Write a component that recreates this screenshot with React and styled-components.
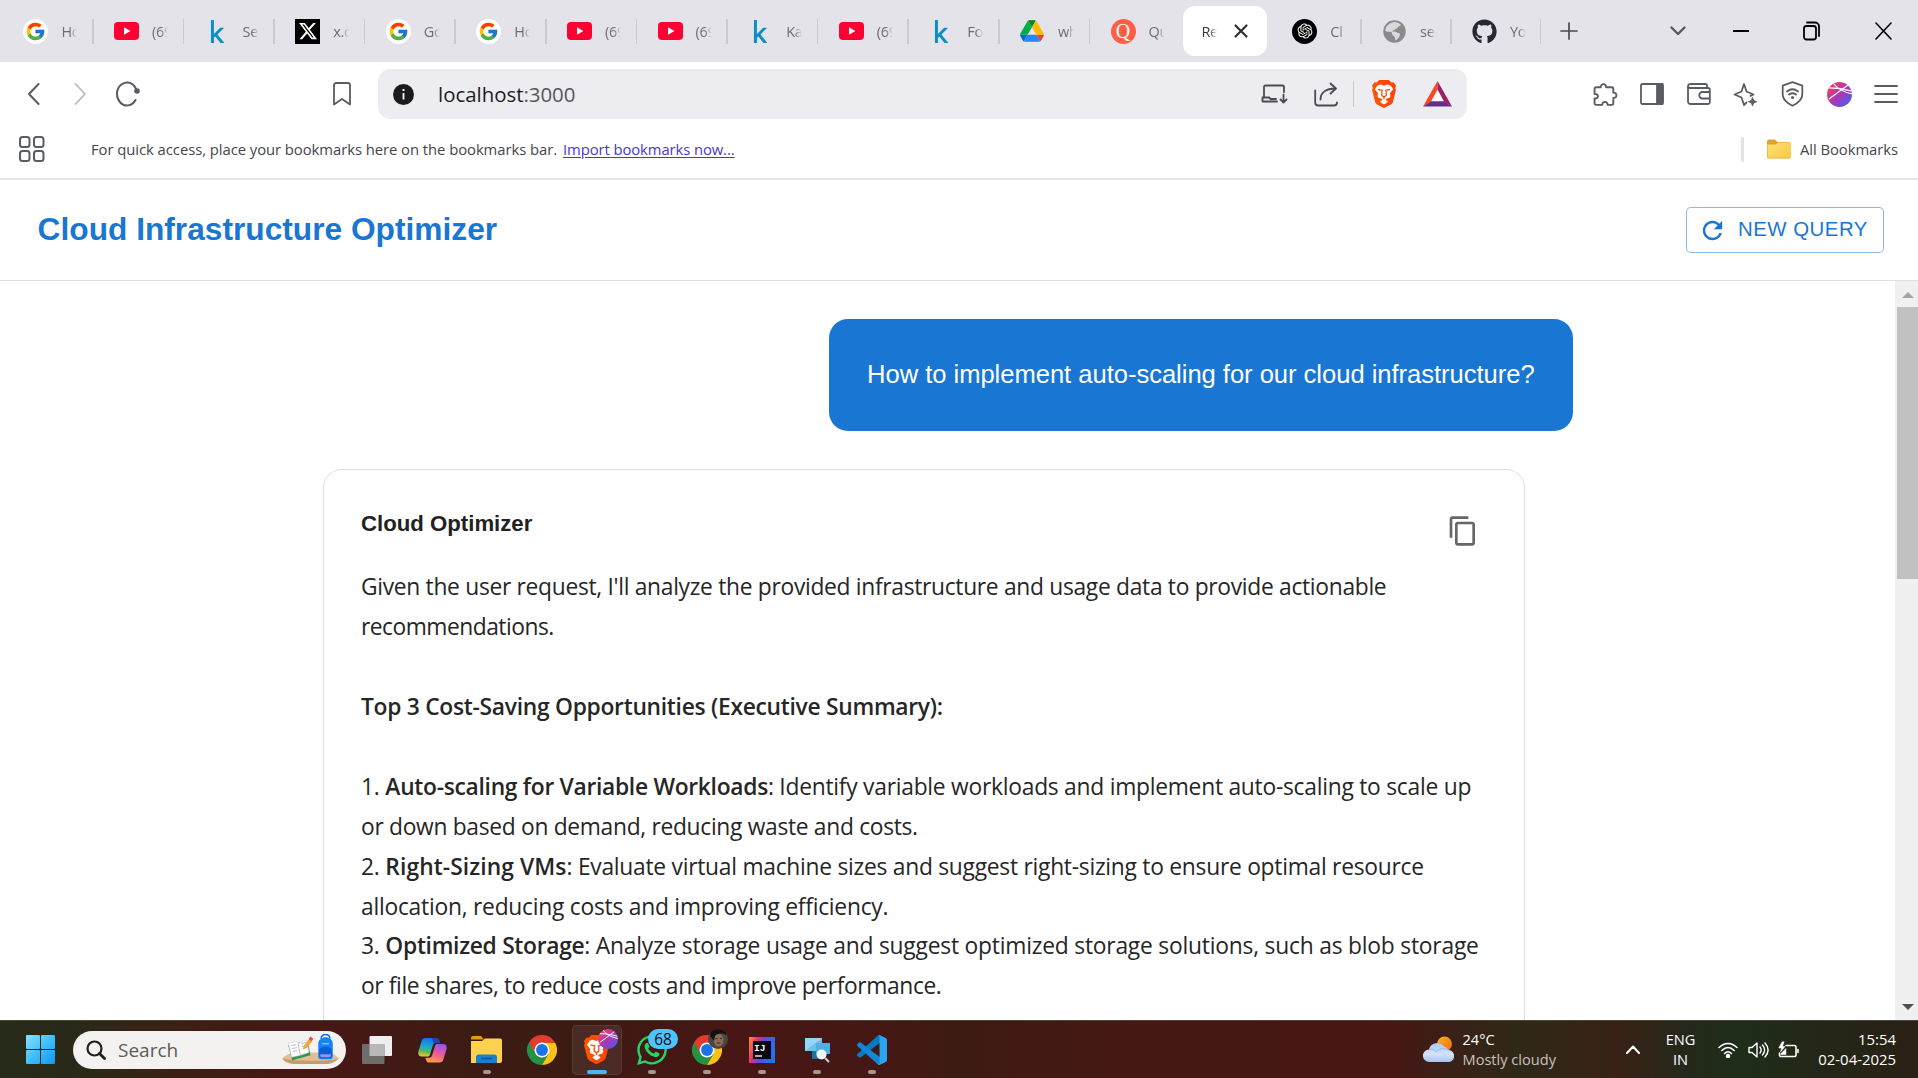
import React from 'react';
import styled, { createGlobalStyle, css } from 'styled-components';
import { FcGoogle } from 'react-icons/fc';
import { FaXTwitter, FaGithub, FaWhatsapp, FaKaggle } from 'react-icons/fa6';
import { RiOpenaiFill } from 'react-icons/ri';

const uiFont = '"Open Sans", "Noto Sans", sans-serif';
const appFont = '"Liberation Sans", Arial, sans-serif';

const GlobalStyle = createGlobalStyle`
  * { box-sizing: border-box; }
  html, body { margin: 0; padding: 0; background: #fff; overflow: hidden; }
  svg { display: block; flex: none; }
`;

const Screen = styled.div`
  width: 1918px;
  height: 1078px;
  display: flex;
  flex-direction: column;
  overflow: hidden;
  background: #fff;
  font-family: ${uiFont};
`;

/* ---------- tab strip ---------- */

const TabStrip = styled.div`
  flex: none;
  height: 62px;
  display: flex;
  align-items: flex-start;
  padding: 6px 0 0 3px;
  background: #e4e3e9;
`;

const TabBox = styled.div`
  flex: none;
  position: relative;
  display: flex;
  align-items: center;
  gap: 13px;
  width: ${(p) => p.$w}px;
  height: 50px;
  padding-left: 20.4px;
  color: #6c6c72;
  ${(p) =>
    p.$sep &&
    css`
      &::after {
        content: '';
        position: absolute;
        right: 0;
        top: 13px;
        width: 1.5px;
        height: 25px;
        background: #cbcad0;
      }
    `}
  ${(p) =>
    p.$active &&
    css`
      margin: 0 5px 0 2.2px;
      padding-left: 18.500px;
      gap: 12px;
      background: #fff;
      color: #3b3b40;
      border-radius: 12px;
    `}
`;

const Favicon = styled.span`
  flex: none;
  width: 25px;
  height: 25px;
  display: flex;
  align-items: center;
  justify-content: center;
  border-radius: ${(p) => (p.$round ? '50%' : 0)};
  background: ${(p) => p.$bg || 'transparent'};
  color: ${(p) => p.$fg || '#000'};
`;

const TabLabel = styled.span`
  flex: none;
  width: 16px;
  overflow: hidden;
  white-space: nowrap;
  font-size: 14.5px;
  line-height: 22px;
  padding-top: 2px;
  letter-spacing: -0.3px;
  mask-image: linear-gradient(90deg, #000 55%, transparent 100%);
`;

const Slot = styled.span`
  flex: none;
  width: ${(p) => p.$w}px;
  height: 100%;
  display: flex;
  align-items: center;
  justify-content: center;
`;

const WindowControls = styled.div`
  flex: 1;
  height: 50px;
  display: flex;
  align-items: center;
`;

const Grow = styled.span`
  flex: 1;
`;

/* ---------- toolbar ---------- */

const Toolbar = styled.div`
  flex: none;
  height: 64px;
  display: flex;
  align-items: center;
  padding: 0 8.6px 0 10px;
  background: #fff;
`;

const AddressBar = styled.div`
  flex: none;
  margin-left: 13px;
  width: 1089px;
  height: 50px;
  display: flex;
  align-items: center;
  padding-left: 15px;
  padding-right: 7px;
  border-radius: 12px;
  background: #edecf1;
`;

const Url = styled.span`
  margin-left: 24px;
  font-size: 20.4px;
  line-height: 28px;
  color: #1b1b1f;
`;

const Port = styled.span`
  color: #55555c;
`;

const Rule = styled.span`
  flex: none;
  width: ${(p) => p.$w}px;
  height: ${(p) => p.$h}px;
  border-radius: 1px;
  background: ${(p) => p.$c};
`;

const Extensions = styled.div`
  flex: 1;
  height: 50px;
  display: flex;
  align-items: center;
  justify-content: flex-end;
`;

/* ---------- bookmarks bar ---------- */

const BookmarksBar = styled.div`
  flex: none;
  height: 54px;
  display: flex;
  align-items: center;
  padding: 0 20px 6px 19px;
  border-bottom: 2px solid #e4e3e9;
  font-size: 14.8px;
  line-height: 20px;
  letter-spacing: -0.04px;
  color: #45454b;
`;

const Hint = styled.span`
  margin-left: 46px;
`;

const ImportLink = styled.a`
  margin-left: 6px;
  color: #4437d8;
  text-decoration: underline;
  text-underline-offset: 2px;
  letter-spacing: -0.08px;
`;

const AllBookmarks = styled.span`
  margin-left: 9px;
`;

/* ---------- application ---------- */

const AppHeader = styled.header`
  flex: none;
  height: 101px;
  display: flex;
  align-items: center;
  justify-content: space-between;
  padding: 0 34px 0 37.6px;
  border-bottom: 1px solid #dfdfdf;
  background: #fff;
`;

const Title = styled.h1`
  margin: -2px 0 0;
  font-family: ${appFont};
  font-weight: 700;
  font-size: 31.7px;
  line-height: 40px;
  color: #1976d2;
`;

const OutlinedButton = styled.button`
  width: 198px;
  height: 46px;
  display: flex;
  align-items: center;
  padding: 0 0 0 10.5px;
  gap: 11.500px;
  border: 1px solid rgba(25, 118, 210, 0.5);
  border-radius: 5px;
  background: #fff;
  color: #1976d2;
  font-family: ${appFont};
  font-size: 20.4px;
  letter-spacing: 0.5px;
  white-space: nowrap;
`;

const ButtonText = styled.span`
  line-height: 24px;
  margin-top: -3px;
`;

const Workspace = styled.div`
  flex: 1;
  min-height: 0;
  display: flex;
`;

const Conversation = styled.main`
  flex: 1;
  min-width: 0;
  overflow: hidden;
  display: flex;
  flex-direction: column;
  gap: 38px;
  padding: 38px 322px 0 323px;
`;

const UserMessage = styled.div`
  flex: none;
  align-self: flex-end;
  width: 744px;
  height: 112px;
  padding: 0 38px 2px;
  display: flex;
  align-items: center;
  border-radius: 19px;
  background: #1976d2;
  color: #fff;
  font-family: ${appFont};
  font-size: 25.6px;
  letter-spacing: -0.04px;
  line-height: 38px;
  white-space: nowrap;
`;

const AnswerCard = styled.article`
  flex: none;
  width: 1202px;
  height: 900px;
  padding: 37px 45px 0 37px;
  border: 1px solid #dfdfdf;
  border-radius: 19px;
  background: #fff;
`;

const CardHeader = styled.div`
  display: flex;
  justify-content: space-between;
  height: 60.400px;
  color: #666;
`;

const CardTitle = styled.h2`
  margin: 0;
  font-family: ${appFont};
  font-weight: 700;
  font-size: 22.2px;
  line-height: 33px;
  color: #212121;
`;

const CopyButton = styled.span`
  margin-top: 8px;
`;

const Line = styled.p`
  margin: 0;
  height: ${(p) => (p.$gap ? 79.8 : 39.9)}px;
  line-height: 39.9px;
  font-size: 22.8px;
  white-space: pre;
  color: #262626;
`;

const Seg = styled.span`
  letter-spacing: ${(p) => p.$t}px;
  font-weight: ${(p) => (p.$b ? 600 : 400)};
`;

const Scrollbar = styled.div`
  flex: none;
  width: 23px;
  display: flex;
  flex-direction: column;
  align-items: center;
  padding: 11px 0 10px 2px;
  background: #f0f0f0;
`;

const Thumb = styled.span`
  width: 21px;
  height: 272px;
  margin-top: 9px;
  background: #c1c1c1;
`;

/* ---------- taskbar ---------- */

const Taskbar = styled.footer`
  flex: none;
  height: 58px;
  display: flex;
  align-items: center;
  padding-right: 22px;
  padding-left: 18px;
  border-top: 1px solid #4a4638;
  background: linear-gradient(
    90deg,
    #262b1a 0,
    #2b2818 90px,
    #3b2016 170px,
    #471715 300px,
    #3c1b15 480px,
    #3b1b14 560px,
    #471615 720px,
    #451715 860px,
    #3e1a15 960px,
    #461715 1150px,
    #471615 1390px,
    #3a2017 1450px,
    #2f2819 1520px,
    #392117 1620px,
    #23291a 1690px,
    #1e2d1a 1740px,
    #242618 1820px,
    #2a2016 1918px
  );
  color: #fff;
`;

const SearchPill = styled.div`
  flex: none;
  width: 273px;
  height: 38px;
  margin: 0 0 0 10px;
  display: flex;
  align-items: center;
  padding: 0 7px 0 13px;
  border-radius: 19px;
  background: #f4f2f1;
  color: #5b5b5b;
  font-size: 19px;
`;

const SearchText = styled.span`
  margin-left: 12px;
  line-height: 24px;
`;

const TaskItem = styled.span`
  flex: none;
  position: relative;
  width: ${(p) => p.$w || 55}px;
  height: 50px;
  display: flex;
  align-items: center;
  justify-content: center;
  &::after {
    content: '';
    display: ${(p) => (p.$run || p.$active ? 'block' : 'none')};
    position: absolute;
    bottom: 1px;
    left: 50%;
    width: ${(p) => (p.$active ? 20 : 8)}px;
    height: 4px;
    margin-left: ${(p) => (p.$active ? -10 : -4)}px;
    border-radius: 2px;
    background: ${(p) => (p.$active ? '#45b8f7' : '#a79592')};
  }
`;

const ActiveTile = styled.span`
  width: 50px;
  height: 50px;
  display: flex;
  align-items: center;
  justify-content: center;
  border: 1px solid rgba(255, 255, 255, 0.08);
  border-radius: 5px;
  background: rgba(255, 255, 255, 0.07);
`;

const Overlay = styled.span`
  position: absolute;
  left: ${(p) => p.$x}px;
  top: ${(p) => p.$y}px;
`;

const Badge = styled.span`
  position: absolute;
  left: 24px;
  top: 4px;
  width: 30px;
  height: 20px;
  border-radius: 10px;
  background: #4cc2ff;
  color: #111;
  font-size: 15.5px;
  line-height: 20px;
  text-align: center;
`;

const Weather = styled.div`
  display: flex;
  align-items: center;
  gap: 9px;
  width: 190px;
`;

const Stack = styled.div`
  display: flex;
  flex-direction: column;
  align-items: ${(p) => p.$align || 'flex-start'};
  width: ${(p) => (p.$w ? p.$w + 'px' : 'auto')};
  margin-top: -1px;
  font-size: ${(p) => p.$fs || 14.6}px;
  line-height: 20px;
  white-space: nowrap;
`;

const Dim = styled.span`
  color: #c9c2bc;
`;

/* ---------- drawings ---------- */

const Youtube = () => (
  <svg width="25" height="18" viewBox="0 0 25 18">
    <rect width="25" height="18" rx="4" fill="#ff0033" />
    <path d="M10 5.2v7.6l6.4-3.8z" fill="#fff" />
  </svg>
);
const Drive = () => (
  <svg width="24" height="22" viewBox="0 0 87.3 78">
    <path d="m6.6 66.85 3.85 6.65c.8 1.4 1.95 2.5 3.3 3.3l13.75-23.8h-27.5c0 1.55.4 3.1 1.2 4.5z" fill="#0066da" />
    <path d="m43.65 25-13.75-23.8c-1.35.8-2.5 1.9-3.3 3.3l-25.4 44a9.06 9.06 0 0 0 -1.2 4.5h27.5z" fill="#00ac47" />
    <path d="m73.55 76.8c1.35-.8 2.5-1.9 3.3-3.3l1.6-2.75 7.65-13.25c.8-1.4 1.2-2.95 1.2-4.5h-27.5l5.85 11.5z" fill="#ea4335" />
    <path d="m43.65 25 13.75-23.8c-1.35-.8-2.9-1.2-4.5-1.2h-18.5c-1.6 0-3.15.45-4.5 1.2z" fill="#00832d" />
    <path d="m59.8 53h-32.3l-13.75 23.8c1.35.8 2.9 1.2 4.5 1.2h50.8c1.6 0 3.15-.45 4.5-1.2z" fill="#2684fc" />
    <path d="m73.4 26.5-12.7-22c-.8-1.4-1.95-2.5-3.3-3.3l-13.75 23.8 16.15 28h27.45c0-1.55-.4-3.1-1.2-4.5z" fill="#ffba00" />
  </svg>
);
const QMark = styled.span`
  font-family: "Liberation Serif", serif;
  font-size: 20px;
  line-height: 24px;
  color: #fff;
`;
const Globe = () => (
  <svg width="23" height="23" viewBox="0 0 23 23">
    <circle cx="11.5" cy="11.5" r="11.2" fill="#8a8a8a" />
    <path d="M10 2.2c3-.6 6 .6 8 2.8-1 1.2-3 1-3.2 2.6-.2 1.2-1.8 1-2.6 1.8-1 1-2.4.6-3 1.8 1.6.4 3.6-.2 4.6 1 1 1.4 3.4.2 3.2 2.4-.4 2.4-2 4.6-4.4 5.8-.8-1.2-.2-2.4-1-3.4-1-1.2-2.8-1.600-2.600-3.400.2-1.400-1.200-2-2.600-1.800-1.800.2-3.800-.6-4.200-1.400.4-4 3.800-7.400 7.800-8.200z" fill="#d9d8dd" />
  </svg>
);
const Lion = ({ s }) => (
  <svg width={s} height={(s * 28) / 24} viewBox="0 0 24 28">
    <defs>
      <linearGradient id="lion" x1="0" y1="0" x2="1" y2="0">
        <stop offset="0" stopColor="#ff5500" />
        <stop offset="1" stopColor="#ff4100" />
      </linearGradient>
    </defs>
    <path d="M7.200 0h9.600l2.600 2.600 2-.3L24 5.600l-.8 2.300.7 2.200-3 11.600c-.4 1.300-1 2.100-2 2.800L13 27.600c-.6.4-1.400.4-2 0l-5.900-3.100c-1-.7-1.600-1.500-2-2.800L.1 10.100l.7-2.200L0 5.600l2.600-3.300 2 .3z" fill="url(#lion)" />
    <path d="M12 5.600c1 0 2.200-.7 3.900-1l2.600 1 2.600 3.500c0 .8-2.900 3.700-3.200 4.700l.6 2.200-.8 1.700-2.700.9-1.500 1.200 2.300 1.600c-.4 1.100-3 2.600-3.800 2.900-.8-.3-3.400-1.800-3.800-2.900l2.300-1.600L9 18.600l-2.700-.9-.8-1.700.6-2.200c-.3-1-3.200-3.900-3.200-4.700l2.600-3.500 2.600-1c1.700.3 2.900 1 3.900 1z" fill="#fff" />
    <path d="M6 9.400l4.200.9-.5 2M18 9.400l-4.200.9.5 2M9.800 12.300v3.200l2.200 1.600 2.200-1.600v-3.200M12 17.100v2.100" fill="none" stroke="#ff4d0a" strokeWidth="1.300" />
  </svg>
);
const BatTriangle = () => (
  <svg width="29" height="26" viewBox="0 0 29 26">
    <path d="M14.500 0L0 25.500l8.500-5 6-11z" fill="#ff4724" />
    <path d="M14.500 0L29 25.500l-8.500-5-6-11z" fill="#9e1f63" />
    <path d="M0 25.500h29l-8.500-5.500h-12z" fill="#662d91" />
    <path d="M14.500 8.500l6.300 11.700H8.200z" fill="#fff" />
  </svg>
);
const Ball = ({ s = 25, id }) => (
  <svg width={s} height={s} viewBox="0 0 25 25">
    <defs>
      <linearGradient id={id} x1="0.1" y1="0.1" x2="0.9" y2="0.9">
        <stop offset="0" stopColor="#f0435f" />
        <stop offset="0.5" stopColor="#b035b4" />
        <stop offset="1" stopColor="#4a5df0" />
      </linearGradient>
      <clipPath id={id + 'c'}>
        <circle cx="12.5" cy="12.5" r="12.5" />
      </clipPath>
    </defs>
    <circle cx="12.5" cy="12.5" r="12.5" fill={`url(#${id})`} />
    <g clipPath={`url(#${id}c)`} stroke="#fff" strokeWidth="1.200" fill="none">
      <path d="M-1 6c9-.5 17 .5 27 3.500M2 17L21 3M6 1c4 5.500 9 9 20 11" />
    </g>
  </svg>
);
const Ico = ({ w = 24, h = w, c = '#5a5c63', sw = 1.8, vb, children }) => (
  <svg width={w} height={h} viewBox={vb || `0 0 ${w} ${h}`} fill="none" stroke={c} strokeWidth={sw} strokeLinecap="round" strokeLinejoin="round">
    {children}
  </svg>
);
const FolderSmall = () => (
  <svg width="24" height="20" viewBox="0 0 24 20">
    <path d="M0 2.500A2 2 0 0 1 2 .5h6l2.500 2.500H22a1.500 1.500 0 0 1 1.500 1.500V18a1.500 1.500 0 0 1-1.500 1.500H1.500A1.500 1.500 0 0 1 0 18z" fill="#dfa32b" />
    <path d="M.5 5.500H9L11 3.500h11a1.500 1.500 0 0 1 1.500 1.500v12.500a1.200 1.200 0 0 1-1.200 1.200H1.700A1.200 1.200 0 0 1 .5 17.500z" fill="url(#fold)" />
    <defs>
      <linearGradient id="fold" x1="0" y1="0" x2="1" y2="1">
        <stop offset="0" stopColor="#ffe07a" />
        <stop offset="1" stopColor="#f8c93e" />
      </linearGradient>
    </defs>
  </svg>
);
const Explorer = () => (
  <svg width="31" height="27" viewBox="0 0 31 27">
    <path d="M0 2a2 2 0 0 1 2-2h8l3 3.500H0z" fill="#e09c12" />
    <path d="M0 5h11l3-2.500h15a2 2 0 0 1 2 2V25a2 2 0 0 1-2 2H0z" fill="#ffd14d" />
    <path d="M5 27v-6a2.500 2.500 0 0 1 2.500-2.500h16A2.500 2.500 0 0 1 26 21v6z" fill="#1481d3" />
    <path d="M10 22.500h11" stroke="#0b4f96" strokeWidth="1.500" />
  </svg>
);
const Chrome = () => (
  <svg width="30" height="30" viewBox="0 0 48 48">
    <path d="M24 24L3.200 12A24 24 0 0 0 24 48l10.400-18z" fill="#229342" />
    <path d="M44.800 12A24 24 0 0 1 24 48l10.400-18L24 12z" fill="#fbc116" />
    <path d="M24 12h20.800A24 24 0 0 0 3.200 12l10.400 18z" fill="#e33b2e" />
    <circle cx="24" cy="24" r="12" fill="#fff" />
    <circle cx="24" cy="24" r="9.500" fill="#1a73e8" />
  </svg>
);
const Avatar = () => (
  <svg width="20" height="20" viewBox="0 0 20 20">
    <defs>
      <clipPath id="av">
        <circle cx="10" cy="10" r="10" />
      </clipPath>
    </defs>
    <g clipPath="url(#av)">
      <rect width="20" height="20" fill="#4b4644" />
      <ellipse cx="10.500" cy="11" rx="5" ry="6.500" fill="#8d6a58" />
      <path d="M3 0h15v6c-3-2-8-2-11 1l-1 5-4-5z" fill="#15110f" />
      <path d="M7.500 9.500h2M12 9.500h2M9 14h3.500" stroke="#3a241b" strokeWidth="1" />
    </g>
  </svg>
);
const WindowsLogo = () => (
  <svg width="29" height="29" viewBox="0 0 29 29">
    <defs>
      <linearGradient id="win" x1="0" y1="0" x2="29" y2="29" gradientUnits="userSpaceOnUse">
        <stop offset="0" stopColor="#8be0fd" />
        <stop offset="0.500" stopColor="#3fc0fb" />
        <stop offset="1" stopColor="#1096f0" />
      </linearGradient>
    </defs>
    <g fill="url(#win)">
      <rect width="14" height="14" rx="1" />
      <rect x="15" width="14" height="14" rx="1" />
      <rect y="15" width="14" height="14" rx="1" />
      <rect x="15" y="15" width="14" height="14" rx="1" />
    </g>
  </svg>
);
const SchoolArt = () => (
  <svg width="57" height="31" viewBox="0 0 58 32">
    <path d="M0 25c8-8 20-6 30-6h16c5 0 10 3 12 6-3 4-8 6-14 6H16C9 31 3 30 0 25z" fill="#e3bd93" />
    <path d="M0 25c6 3 50 4 58 0-3 4-8 6-14 6H16C9 31 3 30 0 25z" fill="#c99a6c" />
    <path d="M6 11l20-4 3 15-19 5z" fill="#2f9650" />
    <path d="M6 9l9-1 2 1 8-3 2.500 13-9 3-9 2z" fill="#fff" stroke="#c8c8d8" strokeWidth="0.500" />
    <path d="M16 9l2.500 13M9 12l5-.8M9.800 15l5-.8M10.400 18l5-.8M19.500 10l5-1.500M20.200 13l5-1.500" stroke="#a9a5bd" strokeWidth="0.800" />
    <path d="M21 16l1-4 6-7 3 2.500-6 7z" fill="#f7a531" />
    <path d="M27 5l2-2.500 3 2.500-2 2.500z" fill="#e8485a" />
    <path d="M40 5c0-6 9-6 9 0" fill="none" stroke="#1168d8" strokeWidth="1.500" />
    <path d="M37 10c0-9 15-9 15 0v13c0 2-1 3-3 3h-9c-2 0-3-1-3-3z" fill="#1583f5" />
    <path d="M38 17c0-5 13-5 13 0v6c0 1-1 2-2 2h-9c-1 0-2-1-2-2z" fill="#0b5fd6" />
    <path d="M39 21h11v1.500c0 1-1 1.500-2 1.500h-7c-1 0-2-.5-2-1.500z" fill="#9c8df7" />
    <path d="M41 10h7" stroke="#7cc4ff" strokeWidth="1.500" />
  </svg>
);
const TaskView = () => (
  <svg width="30" height="28" viewBox="0 0 30 28">
    <rect x="7.500" y="0" width="22.500" height="20" rx="1" fill="#efefef" />
    <rect x="0" y="8" width="22.500" height="20" rx="1" fill="#6f6c6b" />
    <path d="M7.500 8h15v12h-15z" fill="#b9b8b8" />
  </svg>
);
const Copilot = () => (
  <svg width="29" height="26" viewBox="0 0 29 26">
    <defs>
      <linearGradient id="cpa" x1="0.5" y1="0" x2="0.3" y2="1">
        <stop offset="0" stopColor="#1b6fe0" />
        <stop offset="0.45" stopColor="#17a6d8" />
        <stop offset="0.75" stopColor="#58b957" />
        <stop offset="1" stopColor="#f5c828" />
      </linearGradient>
      <linearGradient id="cpb" x1="0.7" y1="0" x2="0.3" y2="1">
        <stop offset="0" stopColor="#9a52e8" />
        <stop offset="0.55" stopColor="#ee5f8e" />
        <stop offset="1" stopColor="#fba042" />
      </linearGradient>
    </defs>
    <path d="M7.500 1h10c1.800 0 3 1 3.500 2.600L21.700 6H18c-1.700 0-2.700.8-3.200 2.600L12 17.400c-.4 1.400-1.200 2-2.400 2H4C1 19.400-.2 17.500.4 14.600L3.600 4C4.200 2 5.400 1 7.500 1z" fill="url(#cpa)" />
    <path d="M21.500 25.500h-10c-1.800 0-3-1-3.500-2.600l-.6-2.200H11c1.700 0 2.700-.8 3.200-2.600L17 9.100c.4-1.400 1.200-2 2.400-2H25c3 0 4.200 1.900 3.600 4.800l-3.200 10.600c-.6 2-1.800 3-3.900 3z" fill="url(#cpb)" />
    <path d="M14 1h3.500c1.800 0 3 1 3.500 2.600L21.700 6H18c-1 0-1.800.3-2.400 1z" fill="#1a48b8" />
  </svg>
);
const JetText = styled.text`
  font-family: "Liberation Mono", monospace;
  font-weight: 700;
  font-size: 9.5px;
  fill: #fff;
`;
const IntelliJ = () => (
  <svg width="26" height="26" viewBox="0 0 26 26">
    <defs>
      <linearGradient id="ij" x1="0" y1="0.3" x2="1" y2="0.6">
        <stop offset="0" stopColor="#fb7a3c" />
        <stop offset="0.25" stopColor="#e4306f" />
        <stop offset="0.5" stopColor="#5d4be0" />
        <stop offset="1" stopColor="#1a78ea" />
      </linearGradient>
    </defs>
    <rect width="26" height="26" fill="url(#ij)" />
    <rect x="4" y="4" width="18" height="18" fill="#0b0714" />
    <JetText x="5" y="13.5">IJ</JetText>
    <path d="M6 19h7" stroke="#fff" strokeWidth="1.300" />
  </svg>
);
const Remote = () => (
  <svg width="26" height="26" viewBox="0 0 26 26">
    <path d="M8 12h12v10H8z" fill="#1f6ea6" />
    <rect x="1" y="1" width="17" height="13" fill="#6cc0ec" />
    <path d="M1 1h17L1 14z" fill="#94d6f6" />
    <rect x="12" y="6" width="14" height="11" fill="#4fb0e6" />
    <circle cx="17.500" cy="17.500" r="5" fill="#eefaff" />
    <path d="M21 21l4 4" stroke="#cbd5db" strokeWidth="2" />
  </svg>
);
const VsCode = () => (
  <svg width="30" height="30" viewBox="0 0 100 100">
    <path d="M96.500 10.800L75.900.9c-2.400-1.200-5.200-.7-7.100 1.200L1.300 63.700c-1.800 1.700-1.800 4.500 0 6.100l5.500 5c1.500 1.400 3.700 1.500 5.300.2L93.400 13.400c2.700-2.100 6.600-.1 6.600 3.300v-.3c0-2.400-1.400-4.600-3.500-5.600z" fill="#0a78c0" />
    <path d="M96.500 89.200l-20.600 9.900c-2.400 1.200-5.200.7-7.100-1.200L1.300 36.300c-1.800-1.700-1.800-4.500 0-6.100l5.500-5c1.500-1.400 3.700-1.500 5.300-.2l81.300 61.700c2.700 2.100 6.600.1 6.600-3.300v.3c0 2.400-1.400 4.600-3.500 5.500z" fill="#1187d6" />
    <path d="M75.900 99.100c-2.400 1.200-5.200.7-7.100-1.200 2.300 2.300 6.200.7 6.200-2.600V4.700c0-3.300-3.900-4.900-6.200-2.600 1.900-1.900 4.700-2.400 7.100-1.200l20.600 9.900c2.200 1 3.500 3.200 3.500 5.600v67.200c0 2.400-1.400 4.600-3.500 5.600z" fill="#2aa5f2" />
  </svg>
);
const CloudSun = () => (
  <svg width="31" height="27" viewBox="0 0 31 27">
    <defs>
      <linearGradient id="sun" x1="0" y1="0" x2="1" y2="1">
        <stop offset="0" stopColor="#fbb42a" />
        <stop offset="1" stopColor="#f0660e" />
      </linearGradient>
      <linearGradient id="cld" x1="0" y1="0" x2="0" y2="1">
        <stop offset="0" stopColor="#a8c8fa" />
        <stop offset="0.6" stopColor="#d3e2fb" />
        <stop offset="1" stopColor="#a8c1ee" />
      </linearGradient>
    </defs>
    <circle cx="21.500" cy="8" r="7.500" fill="url(#sun)" />
    <path d="M6.500 26a6.300 6.300 0 0 1-.6-12.600A8.500 8.500 0 0 1 21 10.500a6 6 0 0 1 4.500 3.500A6 6 0 0 1 24.800 26z" fill="url(#cld)" />
    <path d="M6 13.500c3-1 6 0 7.500 2.500M13 16c2-3.500 8-4.500 12-2" stroke="#8cb0ee" strokeWidth="0.800" fill="none" />
  </svg>
);

/* ---------- data ---------- */

const google = { bg: '#fff', round: true, icon: <FcGoogle size={21} /> };
const youtube = { icon: <Youtube /> };
const kaggle = { fg: '#0c8fc6', icon: <FaKaggle size={23} /> };

const leftTabs = [
  { ...google, label: 'Ho' },
  { ...youtube, label: '(69' },
  { ...kaggle, label: 'Se' },
  { bg: '#000', fg: '#fff', icon: <FaXTwitter size={20} />, label: 'x.c' },
  { ...google, label: 'Go' },
  { ...google, label: 'Ho' },
  { ...youtube, label: '(69' },
  { ...youtube, label: '(69' },
  { ...kaggle, label: 'Ka' },
  { ...youtube, label: '(69' },
  { ...kaggle, label: 'Fo' },
  { icon: <Drive />, label: 'wh' },
  { bg: '#ff5f45', round: true, icon: <QMark>Q</QMark>, label: 'Qu', last: true },
];
const rightTabs = [
  { bg: '#000', fg: '#fff', round: true, icon: <RiOpenaiFill size={18} />, label: 'Cl' },
  { icon: <Globe />, label: 'se' },
  { fg: '#24292f', icon: <FaGithub size={25} />, label: 'Yo' },
];

const answer = [
  [{ s: "Given the user request, I'll analyze the provided infrastructure and usage data to provide actionable", t: -0.305 }],
  [{ s: 'recommendations.', t: -0.5 }],
  [{ s: 'Top 3 Cost-Saving Opportunities (Executive Summary):', t: -0.28, b: 1 }],
  [
    { s: '1. ', t: -0.2 },
    { s: 'Auto-scaling for Variable Workloads', t: -0.29, b: 1 },
    { s: ': Identify variable workloads and implement auto-scaling to scale up', t: -0.25 },
  ],
  [{ s: 'or down based on demand, reducing waste and costs.', t: -0.31 }],
  [
    { s: '2. ', t: -0.2 },
    { s: 'Right-Sizing VMs', t: 0.08, b: 1 },
    { s: ': Evaluate virtual machine sizes and suggest right-sizing to ensure optimal resource', t: -0.26 },
  ],
  [{ s: 'allocation, reducing costs and improving efficiency.', t: -0.24 }],
  [
    { s: '3. ', t: -0.2 },
    { s: 'Optimized Storage', t: -0.3, b: 1 },
    { s: ': Analyze storage usage and suggest optimized storage solutions, such as blob storage', t: -0.21 },
  ],
  [{ s: 'or file shares, to reduce costs and improve performance.', t: -0.38 }],
];

const Tab = ({ tab, w }) => (
  <TabBox $w={w} $sep={!tab.last}>
    <Favicon $bg={tab.bg} $fg={tab.fg} $round={tab.round}>
      {tab.icon}
    </Favicon>
    <TabLabel>{tab.label}</TabLabel>
  </TabBox>
);

export default function App() {
  return (
    <Screen>
      <GlobalStyle />
      <TabStrip>
        {leftTabs.map((t, i) => (
          <Tab key={i} tab={t} w={90.6} />
        ))}
        <TabBox $active $w={84}>
          <TabLabel>Re</TabLabel>
          <Ico w={24} c="#303034" sw={2.200}>
            <path d="M6.500 6.500l11 11M17.500 6.500l-11 11" />
          </Ico>
        </TabBox>
        {rightTabs.map((t, i) => (
          <Tab key={i} tab={t} w={89.8} />
        ))}
        <WindowControls>
          <Slot $w={56}>
            <Ico w={18} c="#4b4b50" sw={1.700}>
              <path d="M9 1v16M1 9h16" />
            </Ico>
          </Slot>
          <Grow />
          <Slot $w={63}>
            <Ico w={16} h={10} c="#55555b" sw={2.300}>
              <path d="M1.500 1.500L8 8l6.500-6.500" />
            </Ico>
          </Slot>
          <Slot $w={64}>
            <Ico w={16} c="#000" sw={2}>
              <path d="M0 8h16" />
            </Ico>
          </Slot>
          <Slot $w={76}>
            <Ico w={17} h={20} c="#000" sw={1.800}>
              <rect x="1" y="5" width="12" height="13.500" rx="2.500" />
              <path d="M4 1.500h8a4 4 0 0 1 4 4V15" />
            </Ico>
          </Slot>
          <Slot $w={69}>
            <Ico w={17} h={18} c="#000" sw={1.600}>
              <path d="M1 1l15 16M16 1L1 17" />
            </Ico>
          </Slot>
        </WindowControls>
      </TabStrip>

      <Toolbar>
        <Slot $w={47}>
          <Ico w={13} h={22} sw={2}>
            <path d="M11.500 1L2 11l9.500 10" />
          </Ico>
        </Slot>
        <Slot $w={47}>
          <Ico w={13} h={22} sw={1.800} c="#b9b9bd">
            <path d="M1.500 1L11 11l-9.500 10" />
          </Ico>
        </Slot>
        <Slot $w={47}>
          <Ico w={26} h={26} sw={2}>
            <path d="M21 8A10 11.500 0 1 0 20.500 19" />
            <circle cx="22" cy="10" r="2.800" fill="#5a5c63" stroke="none" />
          </Ico>
        </Slot>
        <Slot $w={168} />
        <Slot $w={46}>
          <Ico w={18} h={24}>
            <path d="M1 3a2 2 0 0 1 2-2h12a2 2 0 0 1 2 2v19.500l-8-5.500-8 5.500z" />
          </Ico>
        </Slot>
        <AddressBar>
          <svg width="21" height="21" viewBox="0 0 21 21">
            <circle cx="10.500" cy="10.500" r="10.500" fill="#1b1b1f" />
            <path d="M10.500 9v6.500M10.500 5v2" stroke="#fff" strokeWidth="1.800" />
          </svg>
          <Url>
            localhost<Port>:3000</Port>
          </Url>
          <Grow />
          <Slot $w={53}>
            <Ico w={27} h={20} c="#4a4a50">
              <path d="M3 13V3a1.500 1.500 0 0 1 1.500-1.500h17A1.500 1.500 0 0 1 23 3v5M16 17.500H1.500v-4H8l1.500 1.500H15M22.500 10.500v7.500M19.500 15.500l3 3 3-3" />
            </Ico>
          </Slot>
          <Slot $w={52}>
            <Ico w={25} h={25} c="#4a4a50">
              <path d="M1.200 8.500v12a3 3 0 0 0 3 3H20a3 3 0 0 0 3-3M6.500 17.500C6.500 10.500 12 6.500 21.500 6.500M16.500 1.500l5.500 5-5.500 5" />
            </Ico>
          </Slot>
          <Rule $w={1.500} $h={26} $c="#c9c8ce" />
          <Slot $w={60}>
            <Lion s={24} />
          </Slot>
          <Slot $w={46}>
            <BatTriangle />
          </Slot>
        </AddressBar>
        <Extensions>
          <Slot $w={46.800}>
            <Ico w={25} vb="0 0 24 24">
              <path d="M3 5h4.500c-.8-3.500 5.500-4.500 5 0H18a1.500 1.500 0 0 1 1.500 1.500v3.700c3.500-.6 4.500 5.300 0 5V20.500a1.500 1.500 0 0 1-1.500 1.500h-4c.3-3.800-5.500-3.800-5 0H3a1.500 1.500 0 0 1-1.500-1.500v-4.700c4.300.6 4.300-5 0-4.300V6.500A1.500 1.500 0 0 1 3 5z" />
            </Ico>
          </Slot>
          <Slot $w={46.800}>
            <Ico w={24} h={22}>
              <rect x="1" y="1" width="22" height="20" rx="1.500" />
              <path d="M17 1h5.500v20H17z" fill="#5a5c63" />
            </Ico>
          </Slot>
          <Slot $w={46.800}>
            <Ico w={24} h={22}>
              <path d="M20 5V2.500A1.500 1.500 0 0 0 18.500 1H3.500A2.500 2.500 0 0 0 1 3.500v15A2.500 2.500 0 0 0 3.500 21H21a1.800 1.800 0 0 0 1.800-1.800V6.500A1.500 1.500 0 0 0 21.300 5H3a2 2 0 0 1-2-1.500M22.500 9H15.500a3.200 3.200 0 0 0 0 6.500h7" />
            </Ico>
          </Slot>
          <Slot $w={46.800}>
            <Ico w={25} h={25}>
              <path d="M13.500 20.500L11 23l-2.500-7.500L1.500 12.500 8.500 9.500 11 2l2.500 7.500 7 3-3 1.300" />
              <path d="M19.500 15.500l1.200 3 3 1.200-3 1.200-1.200 3-1.200-3-3-1.200 3-1.200z" fill="#5a5c63" strokeWidth="0.800" />
            </Ico>
          </Slot>
          <Slot $w={46.800}>
            <Ico w={23} h={26}>
              <path d="M11.500 1.200l9.800 3.500v9c0 5-5 8.600-9.800 11-4.800-2.400-9.800-6-9.800-11v-9z" />
              <path d="M6 10.500c3.500-2.800 7.500-2.800 11 0M8 13.500c2.300-1.700 4.700-1.700 7 0" />
              <circle cx="11.500" cy="16.500" r="1.500" fill="#5a5c63" stroke="none" />
            </Ico>
          </Slot>
          <Slot $w={46.800}>
            <Ball id="ball1" />
          </Slot>
          <Slot $w={46.800}>
            <Ico w={24} h={20}>
              <path d="M1 2h22M1 10h22M1 18h22" />
            </Ico>
          </Slot>
        </Extensions>
      </Toolbar>

      <BookmarksBar>
        <Ico w={26} h={26} sw={2}>
          <rect x="1" y="1" width="9.500" height="10" rx="2.500" />
          <rect x="15" y="1" width="9.500" height="10" rx="2.500" />
          <rect x="1" y="15" width="9.500" height="10" rx="2.500" />
          <rect x="15" y="15" width="9.500" height="10" rx="2.500" />
        </Ico>
        <Hint>For quick access, place your bookmarks here on the bookmarks bar.</Hint>
        <ImportLink>Import bookmarks now...</ImportLink>
        <Grow />
        <Rule $w={3} $h={25} $c="#e4e3e9" />
        <Slot $w={23} />
        <FolderSmall />
        <AllBookmarks>All Bookmarks</AllBookmarks>
      </BookmarksBar>

      <AppHeader>
        <Title>Cloud Infrastructure Optimizer</Title>
        <OutlinedButton>
          <svg width="29" height="29" viewBox="0 0 24 24" fill="#1976d2">
            <path d="M17.650 6.350C16.200 4.900 14.210 4 12 4c-4.420 0-7.990 3.580-7.990 8s3.570 8 7.990 8c3.730 0 6.840-2.550 7.730-6h-2.080c-.82 2.330-3.040 4-5.650 4-3.310 0-6-2.690-6-6s2.690-6 6-6c1.660 0 3.140.69 4.220 1.780L13 11h7V4l-2.350 2.350z" />
          </svg>
          <ButtonText>NEW QUERY</ButtonText>
        </OutlinedButton>
      </AppHeader>

      <Workspace>
        <Conversation>
          <UserMessage>How to implement auto-scaling for our cloud infrastructure?</UserMessage>
          <AnswerCard>
            <CardHeader>
              <CardTitle>Cloud Optimizer</CardTitle>
              <CopyButton>
                <svg width="32" height="32" viewBox="0 0 24 24" fill="currentColor">
                  <path d="M16 1H4c-1.100 0-2 .9-2 2v14h2V3h12V1zm3 4H8c-1.100 0-2 .9-2 2v14c0 1.100.9 2 2 2h11c1.100 0 2-.9 2-2V7c0-1.100-.9-2-2-2zm0 16H8V7h11v14z" />
                </svg>
              </CopyButton>
            </CardHeader>
            {answer.map((line, i) => (
              <Line key={i} $gap={i === 1 || i === 2}>
                {line.map((seg, j) => (
                  <Seg key={j} $t={seg.t} $b={seg.b}>
                    {seg.s}
                  </Seg>
                ))}
              </Line>
            ))}
          </AnswerCard>
        </Conversation>
        <Scrollbar>
          <svg width="12" height="6" viewBox="0 0 12 6">
            <path d="M6 0l6 6H0z" fill="#a3a3a3" />
          </svg>
          <Thumb />
          <Grow />
          <svg width="12" height="6" viewBox="0 0 12 6">
            <path d="M0 0h12L6 6z" fill="#505050" />
          </svg>
        </Scrollbar>
      </Workspace>

      <Taskbar>
        <Slot $w={45}>
          <WindowsLogo />
        </Slot>
        <SearchPill>
          <Ico w={20} h={20} c="#1f1f1f" sw={2.200}>
            <circle cx="8.500" cy="8.500" r="7" />
            <path d="M13.500 13.500l5 5" strokeWidth="2.800" />
          </Ico>
          <SearchText>Search</SearchText>
          <Grow />
          <SchoolArt />
        </SearchPill>
        <TaskItem $w={61}>
          <TaskView />
        </TaskItem>
        <TaskItem $w={51}>
          <Copilot />
        </TaskItem>
        <TaskItem $w={57} $run>
          <Explorer />
        </TaskItem>
        <TaskItem $w={54}>
          <Chrome />
        </TaskItem>
        <TaskItem $w={55} $active>
          <ActiveTile>
            <Lion s={25} />
          </ActiveTile>
          <Overlay $x={29} $y={4}>
            <Ball s={20} id="ball2" />
          </Overlay>
        </TaskItem>
        <TaskItem $run>
          <FaWhatsapp size={34} color="#25d366" />
          <Badge>68</Badge>
        </TaskItem>
        <TaskItem $run>
          <Chrome />
          <Overlay $x={28.500} $y={4}>
            <Avatar />
          </Overlay>
        </TaskItem>
        <TaskItem $run>
          <IntelliJ />
        </TaskItem>
        <TaskItem $run>
          <Remote />
        </TaskItem>
        <TaskItem $run>
          <VsCode />
        </TaskItem>
        <Grow />
        <Weather>
          <CloudSun />
          <Stack>
            <span>24°C</span>
            <Dim>Mostly cloudy</Dim>
          </Stack>
        </Weather>
        <Slot $w={40}>
          <Ico w={14} h={9} c="#fff" sw={2}>
            <path d="M1 8l6-6.500L13 8" />
          </Ico>
        </Slot>
        <Stack $align="center" $w={56}>
          <span>ENG</span>
          <span>IN</span>
        </Stack>
        <Slot $w={38}>
          <Ico w={20} h={16} c="#fff" sw={1.500}>
            <path d="M1 5.500c5.500-5.500 12.500-5.500 18 0M3.800 8.500c4-4 8.400-4 12.400 0M6.500 11.500c2.300-2.300 4.700-2.300 7 0" />
            <circle cx="10" cy="14" r="1.500" fill="#fff" />
          </Ico>
        </Slot>
        <Slot $w={23}>
          <Ico w={21} h={18} c="#fff" sw={1.400}>
            <path d="M1 6.500v5h3l5 4.500V2L4 6.500zM12 6c1.500 2 1.500 4 0 6M14.500 4c2.800 3.300 2.800 6.700 0 10M17 2c4 4.500 4 9.500 0 14" />
          </Ico>
        </Slot>
        <Slot $w={37}>
          <Ico w={21} h={18} c="#fff" sw={1.600}>
            <path d="M8 4.500h8.500A1.500 1.500 0 0 1 18 6v8a1.500 1.500 0 0 1-1.500 1.500H3A1.500 1.500 0 0 1 1.500 14v-2M20 8.500v3" />
            <path d="M4 1L.8 7h2.700L2.500 11 7 5.500H4.500L6 1zM3 12.500l5-5v6H3z" fill="#fff" strokeWidth="0.500" />
          </Ico>
        </Slot>
        <Stack $align="flex-end" $w={89.500} $fs={14.900}>
          <span>15:54</span>
          <span>02-04-2025</span>
        </Stack>
      </Taskbar>
    </Screen>
  );
}
